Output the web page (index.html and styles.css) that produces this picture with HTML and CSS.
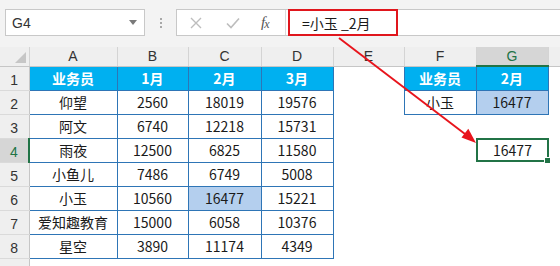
FILE: index.html
```html
<!DOCTYPE html>
<html lang="zh-CN">
<head>
<meta charset="utf-8">
<title>Sheet</title>
<link rel="stylesheet" href="styles.css">
</head>
<body>
<div class="app">
  <div class="toolbar">
    <div class="namebox">
      <span class="ref">G4</span>
      <svg class="dd" width="8" height="5" viewBox="0 0 8 5"><path d="M0 0H8L4 5Z" fill="#7a7a7a"/></svg>
    </div>
    <div class="grip"><i></i><i></i><i></i></div>
    <div class="fxbar">
      <div class="fxbtns">
        <svg class="ico" width="12" height="12" viewBox="0 0 12 12"><path d="M1 1L11 11M11 1L1 11" stroke="#bdbdbd" stroke-width="1.4" fill="none"/></svg>
        <svg class="ico" width="14" height="12" viewBox="0 0 14 12"><path d="M1 6.5L5 10.5L13 1.5" stroke="#bdbdbd" stroke-width="1.6" fill="none"/></svg>
        <span class="fx">f<span class="x">x</span></span>
      </div>
      <div class="formula"><span class="hl">=小玉 _2月</span></div>
    </div>
  </div>
  <table class="sheet">
    <colgroup>
      <col class="c-rh"><col class="c-a"><col class="c-b"><col class="c-c"><col class="c-d"><col class="c-e"><col class="c-f"><col class="c-g"><col>
    </colgroup>
    <thead>
      <tr>
        <th class="corner"><span class="tri"></span></th>
        <th>A</th><th>B</th><th>C</th><th>D</th><th>E</th><th>F</th><th class="colsel">G</th><th class="fill"></th>
      </tr>
    </thead>
    <tbody>
      <tr><th class="rh">1</th><td class="hd">业务员</td><td class="hd">1月</td><td class="hd">2月</td><td class="hd">3月</td><td></td><td class="hd">业务员</td><td class="hd">2月</td><td></td></tr>
      <tr><th class="rh">2</th><td class="b">仰望</td><td class="b">2560</td><td class="b">18019</td><td class="b">19576</td><td></td><td class="b">小玉</td><td class="b lt">16477</td><td></td></tr>
      <tr><th class="rh">3</th><td class="b">阿文</td><td class="b">6740</td><td class="b">12218</td><td class="b">15731</td><td></td><td></td><td></td><td></td></tr>
      <tr><th class="rh rowsel">4</th><td class="b">雨夜</td><td class="b">12500</td><td class="b">6825</td><td class="b">11580</td><td></td><td></td><td class="active"><div class="sel">16477<span class="handle"></span></div></td><td></td></tr>
      <tr><th class="rh">5</th><td class="b">小鱼儿</td><td class="b">7486</td><td class="b">6749</td><td class="b">5008</td><td></td><td></td><td></td><td></td></tr>
      <tr><th class="rh">6</th><td class="b">小玉</td><td class="b">10560</td><td class="b lt">16477</td><td class="b">15221</td><td></td><td></td><td></td><td></td></tr>
      <tr><th class="rh">7</th><td class="b">爱知趣教育</td><td class="b">15000</td><td class="b">6058</td><td class="b">10376</td><td></td><td></td><td></td><td></td></tr>
      <tr><th class="rh">8</th><td class="b">星空</td><td class="b">3890</td><td class="b">11174</td><td class="b">4349</td><td></td><td></td><td></td><td></td></tr>
      <tr><th class="rh"></th><td></td><td></td><td></td><td></td><td></td><td></td><td></td><td></td></tr>
    </tbody>
  </table>
  <svg class="arrow" width="560" height="266" viewBox="0 0 560 266">
    <line x1="339" y1="38" x2="465" y2="134" stroke="#e8141c" stroke-width="2"/>
    <path d="M476 143L461.5 137.6L468.3 128.8Z" fill="#e8141c"/>
  </svg>
</div>
</body>
</html>
```
FILE: styles.css
```css
html, body {
  margin: 0;
  padding: 0;
  background: #fff;
}
.app {
  position: relative;
  width: 560px;
  height: 266px;
  overflow: hidden;
  font-family: "Noto Sans CJK SC", "Liberation Sans", sans-serif;
}
.toolbar {
  height: 47px;
  box-sizing: border-box;
  padding-top: 9px;
  background: #f3f3f3;
  display: flex;
  align-items: flex-start;
}
.namebox {
  margin-left: 5px;
  width: 140px;
  height: 27px;
  box-sizing: border-box;
  border: 1px solid #c8c8c8;
  background: #fff;
  display: flex;
  align-items: center;
  justify-content: space-between;
  padding: 0 7px 0 6px;
}
.ref {
  font-family: "Liberation Sans", sans-serif;
  font-size: 14px;
  color: #333;
}
.grip {
  width: 31px;
  height: 27px;
  display: flex;
  flex-direction: column;
  align-items: center;
  justify-content: center;
  gap: 2px;
}
.grip i {
  width: 2px;
  height: 2px;
  background: #a8a8a8;
}
.fxbar {
  flex: 1;
  height: 27px;
  box-sizing: border-box;
  border: 1px solid #c8c8c8;
  border-right: none;
  background: #fff;
  display: flex;
}
.fxbtns {
  width: 108px;
  display: flex;
  align-items: center;
  padding-left: 13px;
  box-sizing: border-box;
}
.fxbtns .ico:first-child { margin-right: 24px; }
.fxbtns .ico:nth-child(2) { margin-right: 21px; }
.fx {
  font-family: "Liberation Serif", serif;
  font-style: italic;
  font-size: 15px;
  color: #555;
  letter-spacing: -1px;
}
.fx .x {
  font-size: 12px;
  position: relative;
  top: 1px;
}
.formula {
  flex: 1;
  border-left: 1px solid #dadada;
  padding-left: 2px;
}
.hl {
  display: flex;
  align-items: center;
  box-sizing: border-box;
  width: 110px;
  height: 27px;
  margin-top: -1px;
  border: 2px solid #e0161d;
  padding-left: 12px;
  font-size: 14px;
  color: #1a1a1a;
}
.sheet {
  border-collapse: collapse;
  table-layout: fixed;
  width: 560px;
  font-size: 14px;
  color: #1a1a1a;
}
.c-rh { width: 29px; }
.c-a { width: 88px; }
.c-b { width: 71px; }
.c-c { width: 73px; }
.c-d { width: 72px; }
.c-e { width: 71px; }
.c-f { width: 72px; }
.c-g { width: 72px; }
thead th {
  height: 18px;
  padding: 0;
  background: #efefef;
  border-right: 1px solid #d4d4d4;
  border-bottom: 1px solid #c6c6c6;
  font-family: "Liberation Sans", sans-serif;
  font-weight: normal;
  font-size: 14px;
  color: #333;
  line-height: 17px;
}
thead th.fill { border-right: none; }
.corner {
  position: relative;
}
.tri {
  position: absolute;
  right: 3px;
  bottom: 3px;
  width: 0;
  height: 0;
  border-left: 11px solid transparent;
  border-bottom: 11px solid #c6c6c6;
}
.colsel {
  background: #d6d6d6 !important;
  color: #217346 !important;
  border-bottom: 2px solid #217346 !important;
}
tbody tr { height: 24px; }
td {
  padding: 0;
  text-align: center;
  white-space: nowrap;
}
.rh {
  padding: 0;
  background: #efefef;
  border-right: 1px solid #c6c6c6;
  border-bottom: 1px solid #dadada;
  font-family: "Liberation Sans", sans-serif;
  font-weight: normal;
  font-size: 14px;
  color: #333;
  text-align: center;
  vertical-align: bottom;
  line-height: 20px;
}
.rowsel {
  background: #d6d6d6;
  color: #217346;
  border-right: 2px solid #217346;
}
.hd {
  background: #00b0f0;
  color: #fff;
  font-weight: bold;
  border: 1px solid #2e75b6;
}
.b {
  border: 1px solid #2e75b6;
}
.lt {
  background: #b4cfee;
}
.active {
  padding: 0;
}
.sel {
  position: relative;
  height: 24px;
  box-sizing: border-box;
  border: 2px solid #217346;
  line-height: 20px;
  margin-right: -1px;
}
.handle {
  position: absolute;
  right: -4px;
  bottom: -4px;
  width: 5px;
  height: 5px;
  background: #217346;
  border: 1px solid #fff;
}
.arrow {
  position: absolute;
  left: 0;
  top: 0;
  pointer-events: none;
}
```
